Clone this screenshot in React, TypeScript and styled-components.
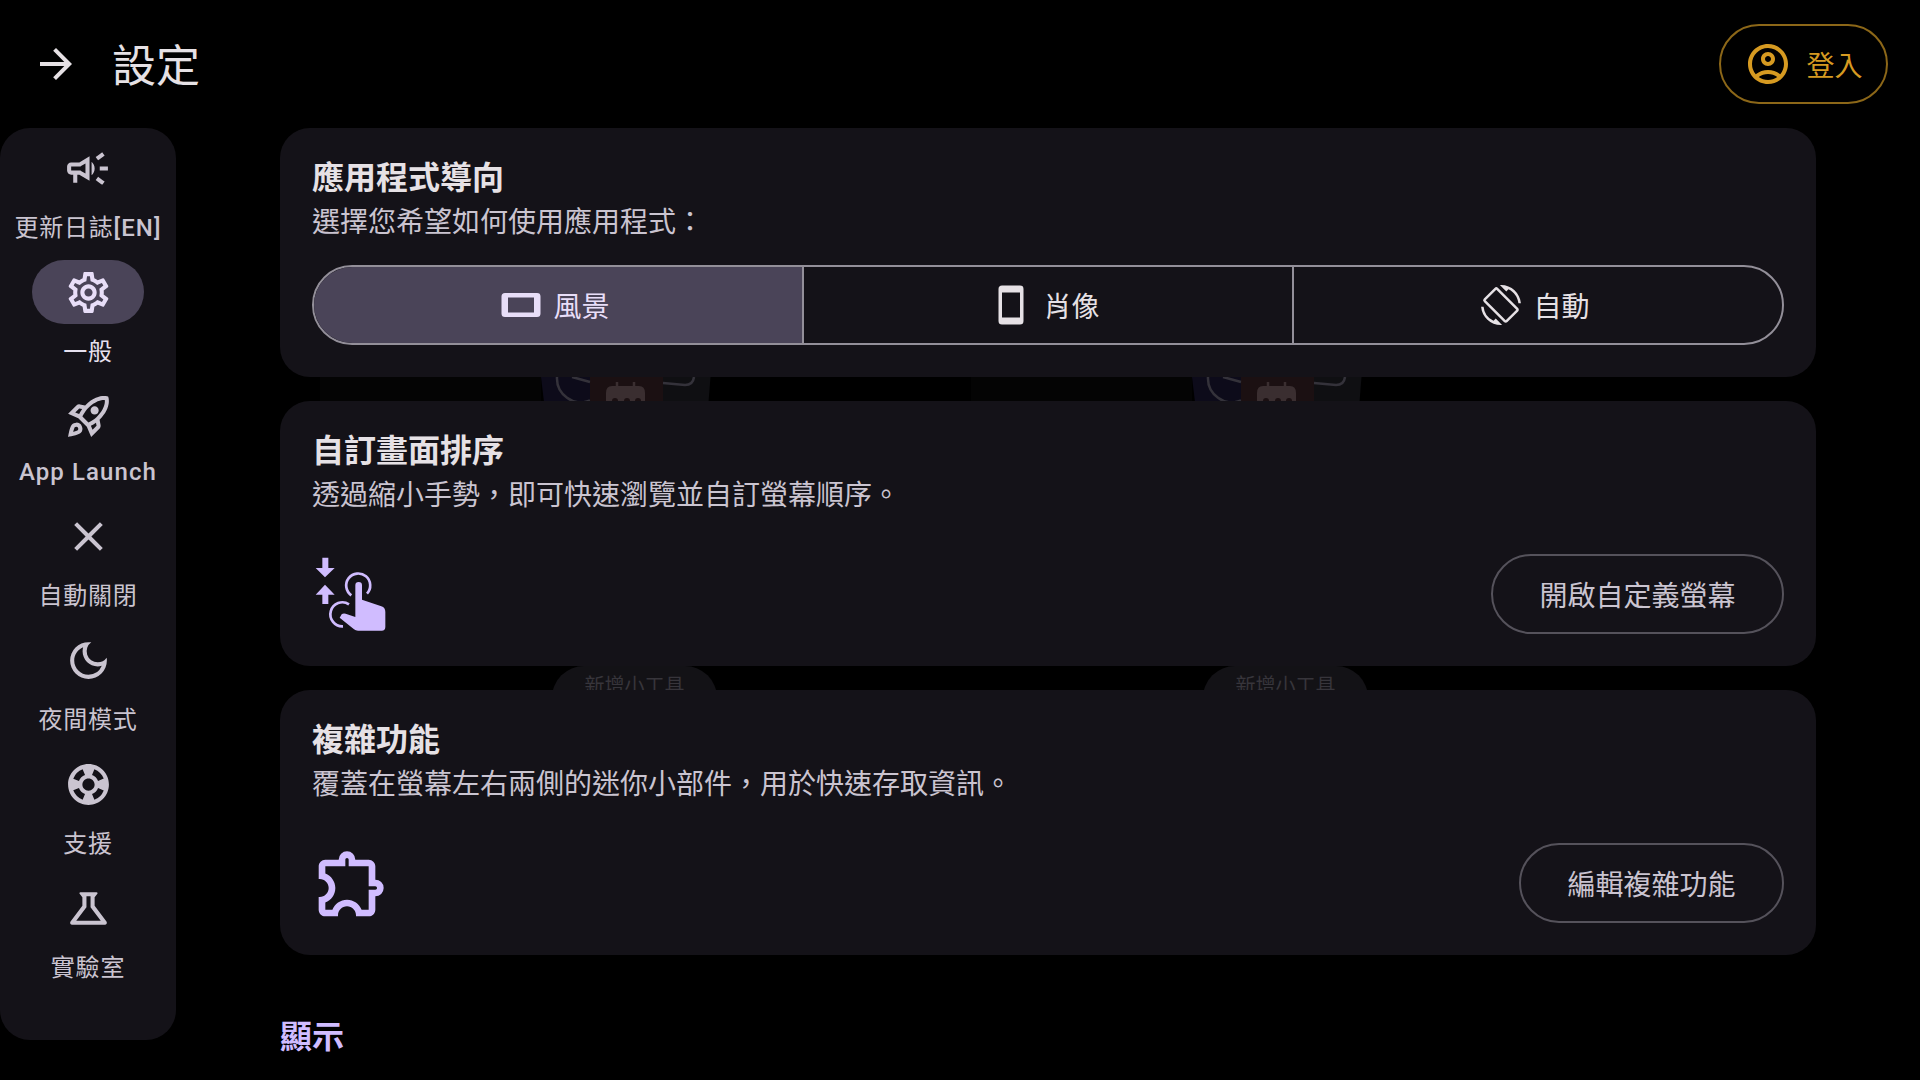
import React from "react";
import styled, { createGlobalStyle } from "styled-components";
import {
  MdArrowForward,
  MdOutlineAccountCircle,
  MdOutlineCampaign,
  MdOutlineSettings,
  MdOutlineRocketLaunch,
  MdClose,
  MdOutlineDarkMode,
  MdSupport,
  MdOutlineScience,
  MdOutlineExtension,
  MdOutlineScreenRotation,
} from "react-icons/md";

const GlobalStyle = createGlobalStyle`
  html, body { margin: 0; padding: 0; background: #000; }
  body {
    width: 1920px; height: 1080px; overflow: hidden;
    font-family: Roboto, "Noto Sans CJK TC", sans-serif;
  }
`;

const Page = styled.div`
  width: 1920px; height: 1080px; overflow: hidden; background: #000;
  display: flex; flex-direction: column;
`;
const Header = styled.header`
  height: 128px; flex: none; display: flex; align-items: center;
  padding: 0 32px; box-sizing: border-box; color: #e6e1e5;
`;
const Title = styled.h1`
  margin: 5px 0 0 32px; flex: 1; font-size: 44px; line-height: 56px; font-weight: 400; color: #e6e1e5;
`;
const LoginButton = styled.button`
  width: 169px; height: 80px; box-sizing: border-box; border-radius: 40px;
  border: 2px solid #8c6718; background: transparent; color: #d69a21;
  display: flex; align-items: center; justify-content: center; gap: 14px;
  font: 400 28px Roboto, "Noto Sans CJK TC", sans-serif; padding: 0;
`;
const Body = styled.div`
  display: flex; align-items: flex-start; flex: 1; min-height: 0;
`;
const Sidebar = styled.nav`
  width: 176px; height: 912px; flex: none; box-sizing: border-box; padding-top: 8px;
  background: #141218; border-radius: 30px;
  display: flex; flex-direction: column; align-items: center;
`;
const NavItem = styled.div<{ $compact?: boolean }>`
  height: ${(p) => (p.$compact ? 120 : 124)}px; flex: none;
  display: flex; flex-direction: column; align-items: center;
`;
const NavIcon = styled.div<{ $active?: boolean }>`
  width: 112px; height: 64px; border-radius: 32px; flex: none;
  display: flex; align-items: center; justify-content: center;
  background: ${(p) => (p.$active ? "#4a4458" : "transparent")};
  color: ${(p) => (p.$active ? "#e8def8" : "#cac4d0")};
`;
const NavLabel = styled.span<{ $active?: boolean; $compact?: boolean }>`
  margin-top: ${(p) => (p.$compact ? 8 : 12)}px; font-size: 24px; line-height: 32px; font-weight: 400; white-space: nowrap;
  letter-spacing: ${(p) => (p.$compact ? 1.1 : 0.8)}px; color: ${(p) => (p.$active ? "#e6e0ee" : "#cac4d0")};
`;
const LatinPart = styled.span`
  font-weight: 500; letter-spacing: 1.1px;
`;
const Content = styled.main`
  width: 1536px; margin-left: 104px; flex: none; display: flex; flex-direction: column;
`;
const Card = styled.section<{ $h: number }>`
  height: ${(p) => p.$h}px; flex: none; box-sizing: border-box; padding: 26px 32px 0;
  background: #141218; border-radius: 30px; display: flex; flex-direction: column;
`;
const CardTitle = styled.h2`
  margin: 0; font-size: 32px; line-height: 48px; font-weight: 600; color: #e6e1e5;
`;
const CardText = styled.p`
  margin: 0; font-size: 28px; line-height: 42px; font-weight: 400; color: #cac4d0;
`;
const Toggle = styled.div`
  margin-top: 21px; height: 80px; display: flex; box-sizing: border-box;
  border: 2px solid #938f99; border-radius: 40px; overflow: hidden;
`;
const Segment = styled.div<{ $active?: boolean }>`
  flex: 1; display: flex; align-items: center; justify-content: center; gap: 12px;
  padding-right: 5px;
  font-size: 28px; color: ${(p) => (p.$active ? "#e8def8" : "#e6e1e5")};
  background: ${(p) => (p.$active ? "#4a4458" : "transparent")};
  & + & { border-left: 2px solid #938f99; }
`;
const ActionRow = styled.div`
  margin-top: auto; margin-bottom: 32px; display: flex; align-items: center; justify-content: space-between;
`;
const OutlineButton = styled.button`
  height: 80px; box-sizing: border-box; padding: 0 46.5px; border-radius: 40px;
  border: 2px solid #55525b; background: transparent; color: #cac4d0;
  font: 400 28px Roboto, "Noto Sans CJK TC", sans-serif;
`;
const FeatureIcon = styled.div`
  width: 80px; height: 80px; color: #d0bcff; flex: none;
`;
const PreviewStrip = styled.div`
  height: 24px; flex: none; overflow: hidden; line-height: 0;
`;
const PillStrip = styled.div`
  height: 24px; flex: none; overflow: hidden; display: flex; gap: 486px; padding-left: 272px;
`;
const AddPill = styled.div`
  width: 165px; height: 64px; flex: none; border-radius: 32px; background: #131216;
  color: #37353b; font-size: 20px; line-height: 40px; text-align: center; white-space: nowrap;
`;
const SectionTitle = styled.h3`
  margin: 60px 0 0; font-size: 32px; line-height: 44px; font-weight: 600; color: #d0bcff;
`;

const LandscapeIcon = () => (
  <svg width="40" height="40" viewBox="0 0 40 40" fill="currentColor">
    <path fillRule="evenodd" d="M4 8h32a3.500 3.500 0 0 1 3.500 3.500v17a3.500 3.500 0 0 1-3.500 3.500H4a3.500 3.500 0 0 1-3.500-3.500v-17A3.500 3.500 0 0 1 4 8zm3 4.500v15h26v-15z" />
  </svg>
);
const PortraitIcon = () => (
  <svg width="40" height="40" viewBox="0 0 40 40" fill="currentColor">
    <path fillRule="evenodd" d="M11 0.500h18a3.500 3.500 0 0 1 3.500 3.500v32a3.500 3.500 0 0 1-3.500 3.500H11a3.500 3.500 0 0 1-3.500-3.500V4A3.500 3.500 0 0 1 11 0.500zm0 7v25h18v-25z" />
  </svg>
);
const PinchIcon = () => (
  <svg width="80" height="80" viewBox="67 71 240 240" fill="currentColor">
    <path d="M98 82h18v31h19l-29 28-28-28h20z" />
    <path d="M106 163l29 30h-19v28H98v-28H78z" />
    <path d="M197 165a10 10 0 0 1 20 0v43l58 20q12 4 12 17v45q0 11-11 11h-71q-7 0-12-4l-43-35 6-10q4-4 12-2l29 10z" />
    <path d="M185 195A36 36 0 1 1 232 190" fill="none" stroke="currentColor" strokeWidth="8" />
    <path d="M178 222A36 36 0 1 0 160 288" fill="none" stroke="currentColor" strokeWidth="8" />
  </svg>
);
const WidgetPreview = ({ dx }: { dx: number }) => (
  <g transform={`translate(${dx} 0)`}>
    <rect x="40" y="0" width="221" height="25" fill="#040404" />
    <path d="M261 0h49v25h-46z" fill="#0d0b1a" />
    <rect x="310" y="0" width="73" height="25" fill="#1b1012" />
    <path d="M383 0h47.500l-2 25H383z" fill="#0f0f12" />
    <path d="M277 0a24 24 0 0 0 33 23.500M292 0l18 5" fill="none" stroke="#34323a" strokeWidth="2.500" />
    <path d="M383 6l22 2q8 0 9-8" fill="none" stroke="#34323a" strokeWidth="2.500" />
    <path d="M337 5v5M354 5v5" stroke="#3a2e30" strokeWidth="2.500" />
    <path d="M332 9h27q6 0 6 7v9h-39v-9q0-7 6-7z" fill="#3a2e30" />
    <circle cx="335" cy="24" r="3" fill="#1b1012" />
    <circle cx="347" cy="24" r="3" fill="#1b1012" />
    <circle cx="358" cy="24" r="3" fill="#1b1012" />
  </g>
);

const nav = [
  { key: "log", label: "更新日誌", latin: "[EN]", Icon: MdOutlineCampaign },
  { key: "general", label: "一般", Icon: MdOutlineSettings, active: true },
  { key: "launch", latin: "App Launch", Icon: MdOutlineRocketLaunch, compact: true },
  { key: "close", label: "自動關閉", Icon: MdClose },
  { key: "night", label: "夜間模式", Icon: MdOutlineDarkMode },
  { key: "support", label: "支援", Icon: MdSupport },
  { key: "lab", label: "實驗室", Icon: MdOutlineScience },
];

export default function App() {
  return (
    <Page>
      <GlobalStyle />
      <Header>
        <MdArrowForward size={48} />
        <Title>設定</Title>
        <LoginButton>
          <MdOutlineAccountCircle size={48} />
          登入
        </LoginButton>
      </Header>
      <Body>
        <Sidebar>
          {nav.map(({ key, label, latin, Icon, active, compact }) => (
            <NavItem key={key} $compact={compact}>
              <NavIcon $active={active}>
                <Icon size={49} />
              </NavIcon>
              <NavLabel $active={active} $compact={compact}>
                {label}
                {latin && <LatinPart>{latin}</LatinPart>}
              </NavLabel>
            </NavItem>
          ))}
        </Sidebar>
        <Content>
          <Card $h={249}>
            <CardTitle>應用程式導向</CardTitle>
            <CardText>選擇您希望如何使用應用程式：</CardText>
            <Toggle>
              <Segment $active>
                <LandscapeIcon />
                風景
              </Segment>
              <Segment>
                <PortraitIcon />
                肖像
              </Segment>
              <Segment>
                <MdOutlineScreenRotation size={40} />
                自動
              </Segment>
            </Toggle>
          </Card>
          <PreviewStrip>
            <svg width="1536" height="25" viewBox="0 0 1536 25">
              <WidgetPreview dx={0} />
              <WidgetPreview dx={651} />
            </svg>
          </PreviewStrip>
          <Card $h={265}>
            <CardTitle>自訂畫面排序</CardTitle>
            <CardText>透過縮小手勢，即可快速瀏覽並自訂螢幕順序。</CardText>
            <ActionRow>
              <FeatureIcon>
                <PinchIcon />
              </FeatureIcon>
              <OutlineButton>開啟自定義螢幕</OutlineButton>
            </ActionRow>
          </Card>
          <PillStrip>
            <AddPill>新增小工具</AddPill>
            <AddPill>新增小工具</AddPill>
          </PillStrip>
          <Card $h={265}>
            <CardTitle>複雜功能</CardTitle>
            <CardText>覆蓋在螢幕左右兩側的迷你小部件，用於快速存取資訊。</CardText>
            <ActionRow>
              <FeatureIcon>
                <MdOutlineExtension size={80} />
              </FeatureIcon>
              <OutlineButton>編輯複雜功能</OutlineButton>
            </ActionRow>
          </Card>
          <SectionTitle>顯示</SectionTitle>
        </Content>
      </Body>
    </Page>
  );
}
